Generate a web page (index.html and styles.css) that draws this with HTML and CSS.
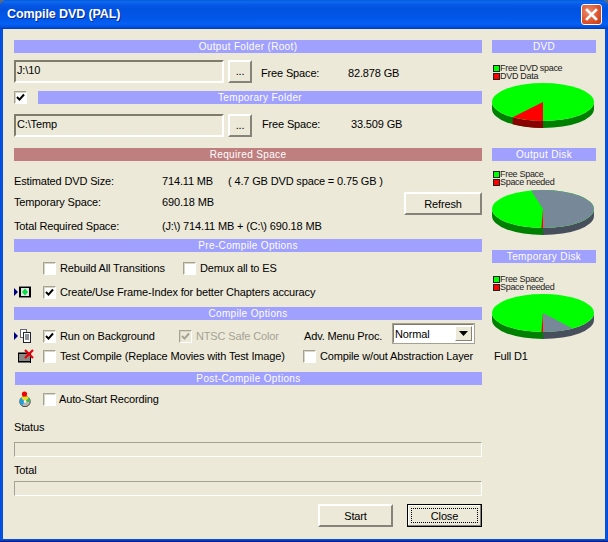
FILE: index.html
```html
<!DOCTYPE html>
<html lang="en">
<head>
<meta charset="utf-8">
<title>Compile DVD (PAL)</title>
<link rel="stylesheet" href="styles.css">
</head>
<body>
<div class="window">
  <div class="titlebar">
    <span class="title">Compile DVD (PAL)</span>
    <span class="close-x"><svg width="13" height="13" viewBox="0 0 13 13"><path d="M2 2 L11 11 M11 2 L2 11" stroke="#fff" stroke-width="2.6" stroke-linecap="square"/></svg></span>
  </div>
  <div class="client">
    <div class="main">
      <div class="hdr">Output Folder (Root)</div>
      <div class="folder mt7">
        <div class="field">J:\10</div>
        <button class="btn browse">...</button>
        <span class="free-label low">Free Space:</span>
        <span class="low">82.878 GB</span>
      </div>
      <div class="temp-head mt8">
        <span class="cb on"><svg width="9" height="9" viewBox="0 0 9 9"><path d="M1 4 L3.5 6.6 L8 1.5" fill="none" stroke="#000" stroke-width="2"/></svg></span>
        <div class="hdr grow">Temporary Folder</div>
      </div>
      <div class="folder mt10">
        <div class="field">C:\Temp</div>
        <button class="btn browse">...</button>
        <span class="free-label nudge high">Free Space:</span>
        <span class="high">33.509 GB</span>
      </div>
      <div class="hdr red mt11">Required Space</div>
      <div class="info">
        <div class="info-rows">
          <div class="info-row r1"><span class="k">Estimated DVD Size:</span><span class="v1">714.11 MB</span><span>( 4.7 GB DVD space = 0.75 GB )</span></div>
          <div class="info-row r2"><span class="k">Temporary Space:</span><span>690.18 MB</span></div>
          <div class="info-row r3"><span class="k">Total Required Space:</span><span>(J:\) 714.11 MB + (C:\) 690.18 MB</span></div>
        </div>
        <button class="btn refresh">Refresh</button>
      </div>
      <div class="hdr">Pre-Compile Options</div>
      <div class="opt pre mt8">
        <span></span>
        <label class="item"><span class="cb"></span>Rebuild All Transitions</label>
        <label class="item"><span class="cb"></span>Demux all to ES</label>
      </div>
      <div class="opt single mt8">
        <span class="icon">
          <svg width="29" height="16" viewBox="0 0 29 16">
            <path d="M0 4 L4 8 L0 12 Z" fill="#000080"/>
            <rect x="5" y="2" width="12" height="12" fill="#000"/>
            <rect x="7" y="4" width="8" height="8" fill="#e6e6e6"/>
            <path d="M5.5 2.5h11M5.5 13.5h11" stroke="#fff" stroke-dasharray="1 1"/>
            <path d="M11 4.5 L14 8 L11 11.5 L8 8 Z" fill="#00e040"/>
          </svg>
        </span>
        <label class="item"><span class="cb on"><svg width="9" height="9" viewBox="0 0 9 9"><path d="M1 4 L3.5 6.6 L8 1.5" fill="none" stroke="#000" stroke-width="2"/></svg></span>Create/Use Frame-Index for better Chapters accuracy</label>
      </div>
      <div class="hdr mt7">Compile Options</div>
      <div class="opt run mt8">
        <span class="icon">
          <svg width="29" height="16" viewBox="0 0 29 16">
            <path d="M0 4 L4 8 L0 12 Z" fill="#000080"/>
            <rect x="6.5" y="1.5" width="6" height="8" fill="#fff" stroke="#667"/>
            <rect x="9.5" y="4.5" width="7" height="10" fill="#fff" stroke="#223"/>
            <path d="M11 7h4M11 9h4M11 11h4" stroke="#223"/>
          </svg>
        </span>
        <label class="item"><span class="cb on"><svg width="9" height="9" viewBox="0 0 9 9"><path d="M1 4 L3.5 6.6 L8 1.5" fill="none" stroke="#000" stroke-width="2"/></svg></span>Run on Background</label>
        <label class="item off"><span class="cb on dis"><svg width="9" height="9" viewBox="0 0 9 9"><path d="M1 4 L3.5 6.6 L8 1.5" fill="none" stroke="#a5a294" stroke-width="2"/></svg></span>NTSC Safe Color</label>
        <span>Adv. Menu Proc.</span>
        <div class="select"><span class="sel-text">Normal</span><span class="sel-btn"><svg width="9" height="5" viewBox="0 0 9 5"><path d="M0 0h9L4.5 5Z" fill="#000"/></svg></span></div>
      </div>
      <div class="opt test mt4">
        <span class="icon">
          <svg width="29" height="16" viewBox="0 0 29 16">
            <rect x="4" y="4" width="13" height="11" fill="#000"/>
            <rect x="5" y="6" width="11" height="7" fill="#8a8a82"/>
            <path d="M4.5 4.5h12M4.5 14.5h12" stroke="#ddd" stroke-dasharray="1 1"/>
            <path d="M11 10 L19 2 M11 2 L19 10" stroke="#e8000c" stroke-width="2.2"/>
          </svg>
        </span>
        <label class="item"><span class="cb"></span>Test Compile (Replace Movies with Test Image)</label>
        <label class="item"><span class="cb"></span>Compile w/out Abstraction Layer</label>
      </div>
      <div class="hdr post mt8">Post-Compile Options</div>
      <div class="opt single rec mt6">
        <span class="icon">
          <svg width="29" height="16" viewBox="0 0 29 16">
            <circle cx="11" cy="10.5" r="5.2" fill="#b8b8b0" stroke="#444"/>
            <path d="M11 10.5 L7 7 A5 5 0 0 1 15 7 Z" fill="#e8e020"/>
            <path d="M11 10.5 L7 7 A5 5 0 0 0 8 14.5 Z" fill="#20a0e0"/>
            <path d="M11 10.5 L15 7 A5 5 0 0 1 15.5 11 Z" fill="#30c050"/>
            <circle cx="11" cy="10.5" r="1.2" fill="#fff"/>
            <circle cx="10.5" cy="3" r="2.6" fill="#f00000"/>
          </svg>
        </span>
        <label class="item tight"><span class="cb"></span>Auto-Start Recording</label>
      </div>
      <div class="line mt12">Status</div>
      <div class="bar mt7"></div>
      <div class="line mt5">Total</div>
      <div class="bar mt3"></div>
      <div class="actions">
        <button class="btn action">Start</button>
        <button class="btn action default"><span class="focus">Close</span></button>
      </div>
    </div>
    <div class="side">
      <div class="hdr">DVD</div>
      <div class="legend mt11">
        <div class="lg"><i class="sw green"></i>Free DVD space</div>
        <div class="lg"><i class="sw redd"></i>DVD Data</div>
      </div>
      <svg class="pie mt3" width="104" height="46" viewBox="0 0 104 46">
        <path d="M0 19 A51 19 0 0 0 102 19 V26 A51 19 0 0 1 0 26 Z" fill="#008000"/>
        <path d="M20.7 34.3 A51 19 0 0 0 51 38 V45 A51 19 0 0 1 20.7 41.3 Z" fill="#8b0000"/>
        <ellipse cx="51" cy="19" rx="51" ry="19" fill="#00ff00"/>
        <path d="M51 19 L20.7 34.3 A51 19 0 0 0 51 38 Z" fill="#ff0000"/>
      </svg>
      <div class="hdr mt19">Output Disk</div>
      <div class="legend mt9">
        <div class="lg"><i class="sw green"></i>Free Space</div>
        <div class="lg"><i class="sw redd"></i>Space needed</div>
      </div>
      <svg class="pie mt4" width="104" height="46" viewBox="0 0 104 46">
        <path d="M0 19 A51 19 0 0 0 51 38 V45 A51 19 0 0 1 0 26 Z" fill="#008000"/>
        <path d="M51 38 A51 19 0 0 0 102 19 V26 A51 19 0 0 1 51 45 Z" fill="#474f5c"/>
        <ellipse cx="51" cy="19" rx="51" ry="19" fill="#00ff00"/>
        <path d="M51 19 L39 0.5 A51 19 0 0 1 51 0 A51 19 0 0 1 51 38 Z" fill="#778899"/>
        <path d="M51 19 L49.4 38 L51 38 Z" fill="#ff0000"/>
      </svg>
      <div class="hdr mt14">Temporary Disk</div>
      <div class="legend mt12">
        <div class="lg"><i class="sw green"></i>Free Space</div>
        <div class="lg"><i class="sw redd"></i>Space needed</div>
      </div>
      <svg class="pie mt3" width="104" height="46" viewBox="0 0 104 46">
        <path d="M0 19 A51 19 0 0 0 51 38 V45 A51 19 0 0 1 0 26 Z" fill="#008000"/>
        <path d="M51 38 A51 19 0 0 0 102 19 V26 A51 19 0 0 1 51 45 Z" fill="#474f5c"/>
        <ellipse cx="51" cy="19" rx="51" ry="19" fill="#00ff00"/>
        <path d="M51 19 L80.7 34.4 A51 19 0 0 1 51 38 Z" fill="#778899"/>
        <path d="M51 19 L49.4 38 L51 38 Z" fill="#ff0000"/>
      </svg>
      <div class="mode">Full D1</div>
    </div>
  </div>
</div>
</body>
</html>
```
FILE: styles.css
```css
* { box-sizing: border-box; }
html, body { margin: 0; padding: 0; }
body {
  width: 608px;
  height: 542px;
  overflow: hidden;
  background: #5a6b80;
  font-family: "Liberation Sans", Arial, sans-serif;
  font-size: 11px;
  letter-spacing: -0.15px;
  color: #000;
}
.window {
  width: 608px;
  height: 542px;
  display: flex;
  flex-direction: column;
  padding: 0 3px 3px 3px;
  background: #0550e0;
  border-radius: 7px 7px 0 0;
  box-shadow: inset 0 -1px 0 #001a80, inset 0 -2px 0 #0040c8;
}
.titlebar {
  flex: 0 0 29px;
  margin: 0 -3px;
  padding: 0 6px 1px 7px;
  display: flex;
  align-items: center;
  justify-content: space-between;
  border-radius: 7px 7px 0 0;
  background: linear-gradient(#0a5ad8 0, #0a6cf0 2px, #0a5ae8 4px, #0052e0 9px, #0256e8 18px, #0460f4 24px, #0250e0 27px, #0038b8 29px);
}
.title {
  color: #fff;
  font: bold 12.5px "Liberation Sans", sans-serif;
  letter-spacing: -0.1px;
  text-shadow: 1px 1px 0 #0a2a90;
}
.close-x {
  width: 21px;
  height: 21px;
  margin-top: 1px;
  display: flex;
  align-items: center;
  justify-content: center;
  border: 1px solid #fff;
  border-radius: 3px;
  background: radial-gradient(circle at 35% 35%, #ec8a6c, #d84f28 65%, #c03a14);
}
.client {
  flex: 1;
  display: flex;
  padding: 11px 0 0 11px;
  gap: 10px;
  background: #ece9d8;
}
.main { width: 468px; flex: none; }
.side { width: 104px; flex: none; }

.hdr {
  height: 13px;
  line-height: 13px;
  text-align: center;
  color: #fff;
  background: #a0a0ff;
  font-size: 10px;
  letter-spacing: 0.35px;
}
.hdr.red { background: #bf7f7f; }
.hdr.post { margin-left: 1px; }
.grow { flex: 1; }
.mt3 { margin-top: 3px; }
.mt4 { margin-top: 4px; }
.mt5 { margin-top: 5px; }
.mt6 { margin-top: 6px; }
.mt7 { margin-top: 7px; }
.mt8 { margin-top: 8px; }
.mt9 { margin-top: 9px; }
.mt10 { margin-top: 10px; }
.mt11 { margin-top: 11px; }
.mt12 { margin-top: 12px; }
.mt14 { margin-top: 14px; }
.mt19 { margin-top: 19px; }

.folder { display: flex; height: 23px; align-items: center; }
.field {
  width: 210px;
  height: 23px;
  padding: 0 0 5px 1px;
  line-height: 16px;
  border: 2px solid;
  border-color: #7f7c6c #fff #fff #7f7c6c;
}
.btn {
  font: inherit;
  letter-spacing: inherit;
  color: #000;
  padding: 0;
  background: #ece9d8;
  border: 2px solid;
  border-color: #fff #85837a #85837a #fff;
}
.browse { width: 24px; height: 23px; margin-left: 4px; line-height: 17px; }
.free-label { width: 87px; margin-left: 9px; }
.nudge { margin-left: 10px; width: 89px; }
.low { padding-top: 3px; }
.high { padding-bottom: 3px; }
.temp-head { display: flex; gap: 11px; align-items: center; height: 13px; }

.cb {
  flex: none;
  width: 13px;
  height: 13px;
  display: inline-flex;
  align-items: center;
  justify-content: center;
  background: #fff;
  border: 1px solid;
  border-color: #a5a294 #fff #fff #a5a294;
  box-shadow: inset 1px 1px 0 #d8d5c4;
}
.cb.dis { background: #ece9d8; }

.info { height: 78px; display: flex; justify-content: space-between; }
.info-row { height: 16px; line-height: 16px; display: flex; }
.k { width: 148px; }
.v1 { width: 66px; }
.r1 { margin-top: 12px; }
.r2 { margin-top: 5px; }
.r3 { margin-top: 8px; }
.refresh { width: 78px; height: 23px; margin-top: 31px; }

.opt { display: grid; height: 16px; align-items: center; white-space: nowrap; }
.pre { grid-template-columns: 29px 140px auto; }
.single { grid-template-columns: 29px auto; }
.run { grid-template-columns: 29px 136px 125px 88px 83px; }
.test { grid-template-columns: 29px 260px auto; }
.item { display: flex; align-items: center; gap: 4px; }
.tight { gap: 3px; }
.off { color: #a5a294; }
.icon { display: flex; height: 16px; }

.select {
  height: 21px;
  margin-top: -5px;
  display: flex;
  align-items: center;
  justify-content: space-between;
  padding-left: 1px;
  background: #fff;
  border: 2px solid;
  border-color: #7f7c6c #fff #fff #7f7c6c;
  outline: 1px solid #a5a294;
  outline-offset: -1px;
}
.sel-btn {
  width: 17px;
  height: 15px;
  margin-right: 1px;
  display: flex;
  align-items: center;
  justify-content: center;
  background: #ece9d8;
  border: 1px solid;
  border-color: #fff #85837a #85837a #fff;
}

.line { height: 16px; line-height: 16px; }
.bar {
  height: 15px;
  border: 1px solid;
  border-color: #a5a294 #fff #fff #a5a294;
}
.actions { display: flex; justify-content: flex-end; gap: 14px; margin-top: 8px; }
.action { width: 75px; height: 23px; }
.default {
  border: 1px solid #000;
  box-shadow: inset -1px -1px 0 #85837a, inset 1px 1px 0 #fff;
  padding: 3px;
}
.focus {
  display: block;
  height: 15px;
  line-height: 14px;
  border: 1px dotted #000;
}

.legend { height: 16px; font-size: 9px; letter-spacing: -0.3px; line-height: 8px; color: #222; }
.lg { display: flex; align-items: center; height: 8px; white-space: nowrap; }
.sw {
  width: 7px;
  height: 7px;
  margin: 0 0 0 1px;
  border: 1px solid #222;
}
.green { background: #00ff00; }
.redd { background: #ff0000; }
.pie { display: block; }
.mode { margin: 8px 0 0 2px; height: 16px; line-height: 16px; }
```
